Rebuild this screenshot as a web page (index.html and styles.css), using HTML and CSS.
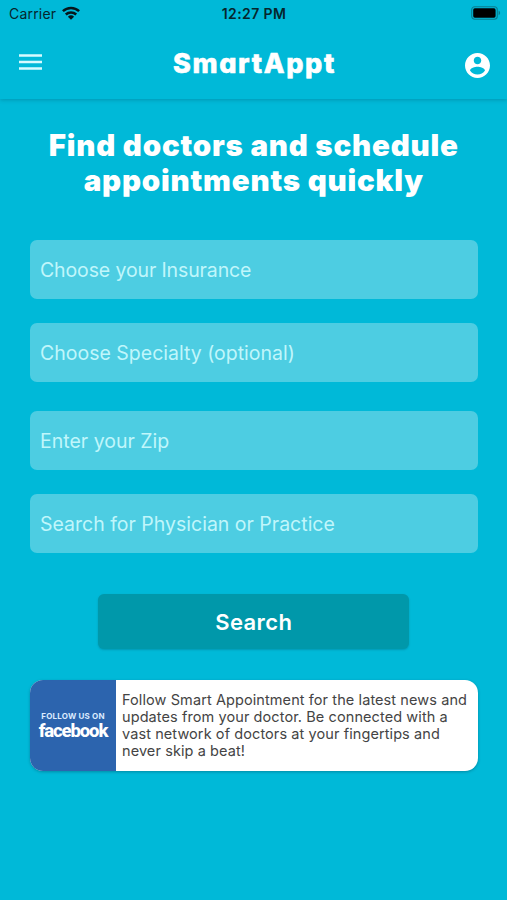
FILE: index.html
```html
<!DOCTYPE html>
<html lang="en">
<head>
<meta charset="utf-8">
<title>SmartAppt</title>
<link rel="stylesheet" href="styles.css">
</head>
<body>
<header class="top">
  <div class="status">
    <div class="carrier"><span>Carrier</span>
      <svg class="wifi" viewBox="0 0 18 14" width="18" height="14"><g fill="none" stroke="#06171b" stroke-width="2.5"><path d="M.9 5.2a11.7 11.7 0 0 1 16.2 0"/><path d="M3.8 8.5a7.6 7.6 0 0 1 10.4 0"/></g><path fill="#06171b" d="M9 13.8 5.9 10.7a4.6 4.6 0 0 1 6.2 0z"/></svg>
    </div>
    <div class="time">12:27 PM</div>
    <svg class="battery" viewBox="0 0 30 14" width="30" height="14"><rect x=".7" y=".7" width="25.6" height="12.6" rx="3" fill="none" stroke="#087d8f" stroke-width="1.1"/><rect x="2.2" y="2.3" width="22.4" height="9.4" rx="1.6" fill="#000"/><path d="M27.6 4.8v4.4c2-.6 2-3.8 0-4.4z" fill="#087d8f"/></svg>
  </div>
  <nav class="bar">
    <svg class="menu" viewBox="0 0 23 16" width="23" height="16"><path d="M0 1.5h23M0 8h23M0 14.5h23" stroke="#d6fbff" stroke-width="2.6"/></svg>
    <div class="logo">SmartAppt</div>
    <svg class="user" viewBox="2 2 20 20" width="25" height="25"><path fill="#fff" d="M12 2C6.480 2 2 6.480 2 12s4.480 10 10 10 10-4.480 10-10S17.520 2 12 2zm0 3c1.660 0 3 1.340 3 3s-1.340 3-3 3-3-1.340-3-3 1.340-3 3-3zm0 14.200c-2.500 0-4.710-1.280-6-3.220.030-1.990 4-3.080 6-3.080 1.990 0 5.970 1.090 6 3.080-1.290 1.940-3.500 3.220-6 3.220z"/></svg>
  </nav>
</header>
<main>
  <h1>Find doctors and schedule<br>appointments quickly</h1>
  <form class="form">
    <div class="group">
      <div class="field"><span class="insurance">Choose your Insurance</span></div>
      <div class="field">Choose Specialty (optional)</div>
    </div>
    <div class="group">
      <div class="field">Enter your Zip</div>
      <div class="field">Search for Physician or Practice</div>
    </div>
    <button type="button" class="search">Search</button>
  </form>
  <section class="card">
    <div class="fb"><div class="follow">FOLLOW US ON</div><div class="brand">facebook</div></div>
    <p>Follow Smart Appointment for the latest news and<br>updates from your doctor. Be connected with a<br>vast network of doctors at your fingertips and<br>never skip a beat!</p>
  </section>
</main>
</body>
</html>
```

FILE: styles.css
```css
* { box-sizing: border-box; }
body { margin: 0; height: 900px; overflow: hidden; background: #00b9d8; font-family: Inter, "Liberation Sans", sans-serif; }
svg { display: block; flex: none; }
.top { height: 99px; box-shadow: 0 1px 4px rgba(0, 70, 90, .3); }
.status { height: 27px; display: grid; grid-template-columns: 1fr auto 1fr; align-items: center; padding: 0 6px 0 9px; color: #06262d; font-size: 14px; }
.carrier { display: flex; align-items: center; gap: 6px; letter-spacing: .2px; }
.wifi { margin-top: -1px; }
.time { font-size: 14px; font-weight: 600; letter-spacing: .4px; margin-right: 2px; }
.battery { justify-self: end; margin-top: -1px; }
.bar { height: 72px; display: grid; grid-template-columns: 1fr auto 1fr; align-items: center; padding: 0 17px 0 19px; }
.menu { margin-top: -3px; }
.logo { color: #fff; font-size: 27px; line-height: 34px; font-weight: 800; font-feature-settings: "cv11"; letter-spacing: 1.700px; margin-top: 1px; -webkit-text-stroke: .6px #fff; }
.user { justify-self: end; margin-top: 4px; }
main { padding: 29px 29.500px 0 30px; }
h1 { margin: 0 0 41.500px; text-align: center; color: #fff; font-size: 29.500px; line-height: 35.250px; font-weight: 900; letter-spacing: .8px; white-space: nowrap; }
.form { display: flex; flex-direction: column; gap: 29px; }
.group { display: flex; flex-direction: column; gap: 24px; }
.field { height: 59px; display: flex; align-items: center; padding-left: 10px; border-radius: 7px; background: #4dcde2; color: #c0f6fb; font-size: 19.500px; white-space: nowrap; }
.insurance { letter-spacing: -.12px; }
.search { align-self: center; width: 311px; height: 55px; margin-top: 12px; border: 0; border-radius: 6px; background: #0098aa; box-shadow: 0 1px 2px rgba(0, 80, 100, .3); color: #fff; font: 600 22px Inter, sans-serif; letter-spacing: .4px; }
.card { display: flex; height: 91px; margin-top: 31px; border-radius: 13px; overflow: hidden; background: #fff; box-shadow: 0 1px 3px rgba(0, 70, 90, .4); }
.fb { width: 86px; flex: none; background: #2c64ae; color: #fff; display: flex; flex-direction: column; align-items: center; justify-content: center; }
.follow { font-size: 8px; line-height: 10px; font-weight: 700; letter-spacing: .2px; white-space: nowrap; color: #dcebff; }
.brand { font: 800 18.500px/20px Roboto, sans-serif; letter-spacing: -1.100px; }
.card p { margin: 10.500px 0 0 6px; color: #444; font-size: 14.500px; line-height: 17.200px; letter-spacing: .09px; white-space: nowrap; }
```
